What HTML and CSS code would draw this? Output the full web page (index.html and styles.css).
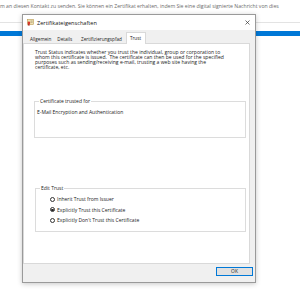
FILE: index.html
```html
<!DOCTYPE html>
<html>

<head>
    <link rel="stylesheet" href="styles.css">
</head>

<body>
    <div class="page">
        <p class="page-note">m an diesen Kontakt zu senden. Sie können ein Zertifikat erhalten, indem Sie eine digital signierte Nachricht von dies</p>
        <div class="page-rule"></div>
        <div class="page-bar"></div>
    </div>

    <div class="dialog">
        <div class="titlebar">
            <svg class="title-icon" width="7" height="7" viewBox="0 0 7 7">
                <rect x="0.5" y="0.5" width="6" height="5" fill="#efe2b4" stroke="#b89a52" stroke-width="0.6" />
                <line x1="3.5" y1="2" x2="5.6" y2="2" stroke="#8a7a55" stroke-width="0.5" />
                <line x1="3.5" y1="3.3" x2="5.6" y2="3.3" stroke="#8a7a55" stroke-width="0.5" />
                <path d="M1.2 4.6 L0.8 6.9 L1.9 6.2 L2.6 6.9 L2.5 4.6 Z" fill="#b5261e" />
                <circle cx="1.9" cy="3.9" r="1.3" fill="#d8362b" />
            </svg>
            <span class="title-text">Zertifikateigenschaften</span>
            <svg class="close" width="5" height="5" viewBox="0 0 5 5">
                <line x1="0.5" y1="0.5" x2="4.5" y2="4.5" stroke="#333" stroke-width="0.7" />
                <line x1="4.5" y1="0.5" x2="0.5" y2="4.5" stroke="#333" stroke-width="0.7" />
            </svg>
        </div>

        <div class="dialog-body">
            <div class="tabs">
                <span class="tab">Allgemein</span>
                <span class="tab tab-wide">Details</span>
                <span class="tab">Zertifizierungspfad</span>
                <span class="tab active">Trust</span>
            </div>

            <div class="panel">
                <p class="intro">Trust Status indicates whether you trust the individual, group or corporation to<br>
                    whom this certificate is issued.&nbsp; The certificate can then be used for the specified<br>
                    purposes such as sending/receiving e-mail, trusting a web site having the<br>
                    certificate, etc.</p>

                <fieldset class="group group-purposes">
                    <legend>Certificate trusted for</legend>
                    <p class="purpose">E-Mail Encryption and Authentication</p>
                </fieldset>

                <fieldset class="group group-edit">
                    <legend>Edit Trust</legend>
                    <div class="radios">
                        <div class="radio"><span class="dot"></span>Inherit Trust from Issuer</div>
                        <div class="radio"><span class="dot checked"></span>Explicitly Trust this Certificate</div>
                        <div class="radio"><span class="dot"></span>Explicitly Don't Trust this Certificate</div>
                    </div>
                </fieldset>
            </div>

            <div class="footer">
                <button class="ok">OK</button>
            </div>
        </div>
    </div>
</body>

</html>
```

FILE: styles.css
```css
* {
    margin: 0;
    box-sizing: border-box;
}

body {
    width: 300px;
    height: 296px;
    overflow: hidden;
    background: #fff;
    font-family: "Segoe UI", "Open Sans", sans-serif;
    color: #222;
}

/* page behind the dialog */
.page-note {
    margin-top: 3px;
    font-size: 5.15px;
    line-height: 6px;
    color: #6a6a6a;
    white-space: nowrap;
    overflow: hidden;
}

.page-rule {
    margin-top: 13px;
    height: 1px;
    background: #e3e3e3;
}

.page-bar {
    margin-top: 8px;
    height: 5px;
    background: #0078d7;
}

/* dialog window */
.dialog {
    position: absolute;
    left: 22px;
    top: 14px;
    width: 234px;
    height: 269px;
    display: flex;
    flex-direction: column;
    border: 1px solid #9a9a9a;
    background: #f0f0f0;
    box-shadow: 0 1px 5px rgba(0, 0, 0, 0.22);
}

.titlebar {
    height: 15px;
    display: flex;
    align-items: center;
    padding: 0 5px 0 4px;
    background: #fff;
}

.title-icon {
    display: block;
}

.title-text {
    margin-left: 3px;
    font-size: 5.6px;
    color: #111;
    flex: 1;
}

.close {
    display: block;
}

.dialog-body {
    flex: 1;
    display: flex;
    flex-direction: column;
}

.tabs {
    height: 14px;
    display: flex;
    align-items: flex-end;
    padding-left: 4px;
    position: relative;
    z-index: 1;
}

.tab {
    height: 11px;
    padding: 0 2px;
    font-size: 4.65px;
    line-height: 10px;
    color: #222;
    border: 1px solid transparent;
    border-bottom: none;
}

.tab-wide {
    margin-right: 3px;
}

.tab.active {
    height: 12px;
    margin-left: 1px;
    padding: 0 4px 0 3px;
    background: #fff;
    border-color: #d9d9d9;
    line-height: 11px;
}

.panel {
    height: 221px;
    margin-top: -1px;
    margin-right: 5px;
    padding: 6px 3px 0 10px;
    background: #fff;
    border: 1px solid #d9d9d9;
}

.intro {
    margin-left: 1px;
    font-size: 5.05px;
    line-height: 5px;
}

.group {
    border: 1px solid #dcdcdc;
    padding: 0 2px;
    min-inline-size: 0;
}

.group legend {
    margin-left: 2px;
    padding: 0 1px;
    font-size: 5px;
    line-height: 6px;
}

.group-purposes {
    margin-top: 28px;
    padding-top: 5px;
    padding-bottom: 22px;
}

.purpose {
    font-size: 5px;
    line-height: 6px;
}

.group-edit {
    margin-top: 47px;
    margin-left: 1px;
    padding-top: 3px;
    padding-bottom: 5px;
}

.radios {
    margin-left: 12px;
}

.radio {
    height: 10.5px;
    display: flex;
    align-items: center;
    gap: 2px;
    font-size: 5px;
}

.dot {
    width: 5px;
    height: 5px;
    border: 0.8px solid #333;
    border-radius: 50%;
    display: flex;
    align-items: center;
    justify-content: center;
}

.dot.checked::after {
    content: "";
    width: 2.2px;
    height: 2.2px;
    border-radius: 50%;
    background: #222;
}

.footer {
    flex: 1;
    display: flex;
    justify-content: flex-end;
    padding: 3px 2px 0 0;
}

.ok {
    width: 37px;
    height: 9px;
    padding: 0;
    border: 1px solid #0078d7;
    background: #e1e1e1;
    font-family: "Segoe UI", "Open Sans", sans-serif;
    font-size: 4.9px;
    line-height: 7px;
    color: #222;
}
```
